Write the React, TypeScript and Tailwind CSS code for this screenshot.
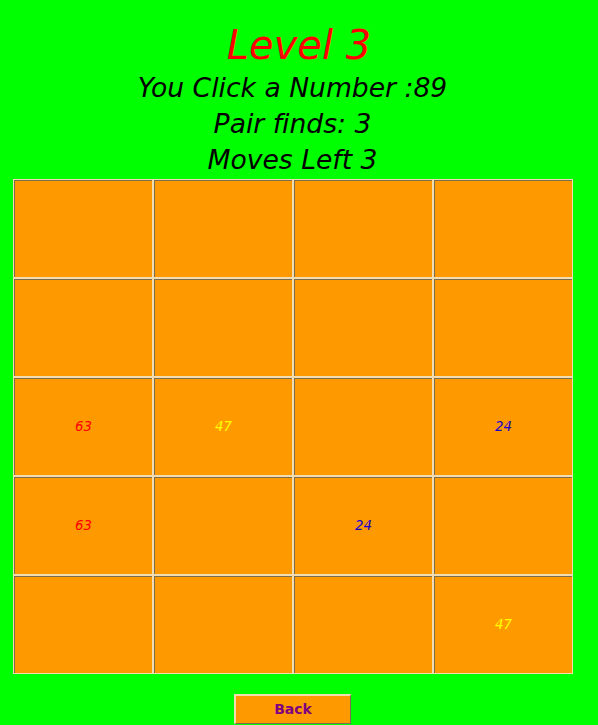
import React from 'react';

type Cell = { value?: number };

const colors: Record<number, string> = {
  63: 'text-[#ff0000]',
  47: 'text-[#ffff00]',
  24: 'text-[#1a00c8]',
};

const board: Cell[][] = [
  [{}, {}, {}, {}],
  [{}, {}, {}, {}],
  [{ value: 63 }, { value: 47 }, {}, { value: 24 }],
  [{ value: 63 }, {}, { value: 24 }, {}],
  [{}, {}, {}, { value: 47 }],
];

export default function App() {
  return (
    <div className="min-h-screen w-full bg-[#00ff00] font-['DejaVu_Sans',sans-serif] italic [font-variant-ligatures:none]">
      <div className="flex flex-col items-center pt-[20px]">
        <h1 className="text-[40px] leading-[50px] text-[#ff0000] font-normal">Level 3</h1>
      </div>
      <div className="w-[585px] flex flex-col items-center">
        <p className="text-[26.6px] leading-[36px] text-black">You Click a Number :89</p>
        <p className="text-[26.6px] leading-[36px] text-black">Pair finds: 3</p>
        <p className="text-[26.6px] leading-[36px] text-black">Moves Left 3</p>
      </div>

      {/* game board */}
      <div className="mt-px ml-[13px] w-[560px] bg-[#f3dcb0] p-px">
        <div className="grid grid-cols-4 gap-[2px]">
          {board.flat().map((cell, i) => (
            <div
              key={i}
              className="h-[97px] w-[138px] border-t border-l border-[#7a6d4e] bg-[#ff9900] flex items-center justify-center"
            >
              {cell.value !== undefined && (
                <span className={`text-[13.3px] ${colors[cell.value]}`}>{cell.value}</span>
              )}
            </div>
          ))}
        </div>
      </div>

      <div className="w-[585px] flex justify-center pt-[20px] pb-px">
        <button className="h-[30px] w-[117px] border-t-2 border-l-2 border-b border-r border-t-[#f3dcb0] border-l-[#f3dcb0] border-b-[#7a6d4e] border-r-[#7a6d4e] bg-[#ff9900] not-italic font-bold text-[14px] text-[#800080]">
          Back
        </button>
      </div>
    </div>
  );
}
